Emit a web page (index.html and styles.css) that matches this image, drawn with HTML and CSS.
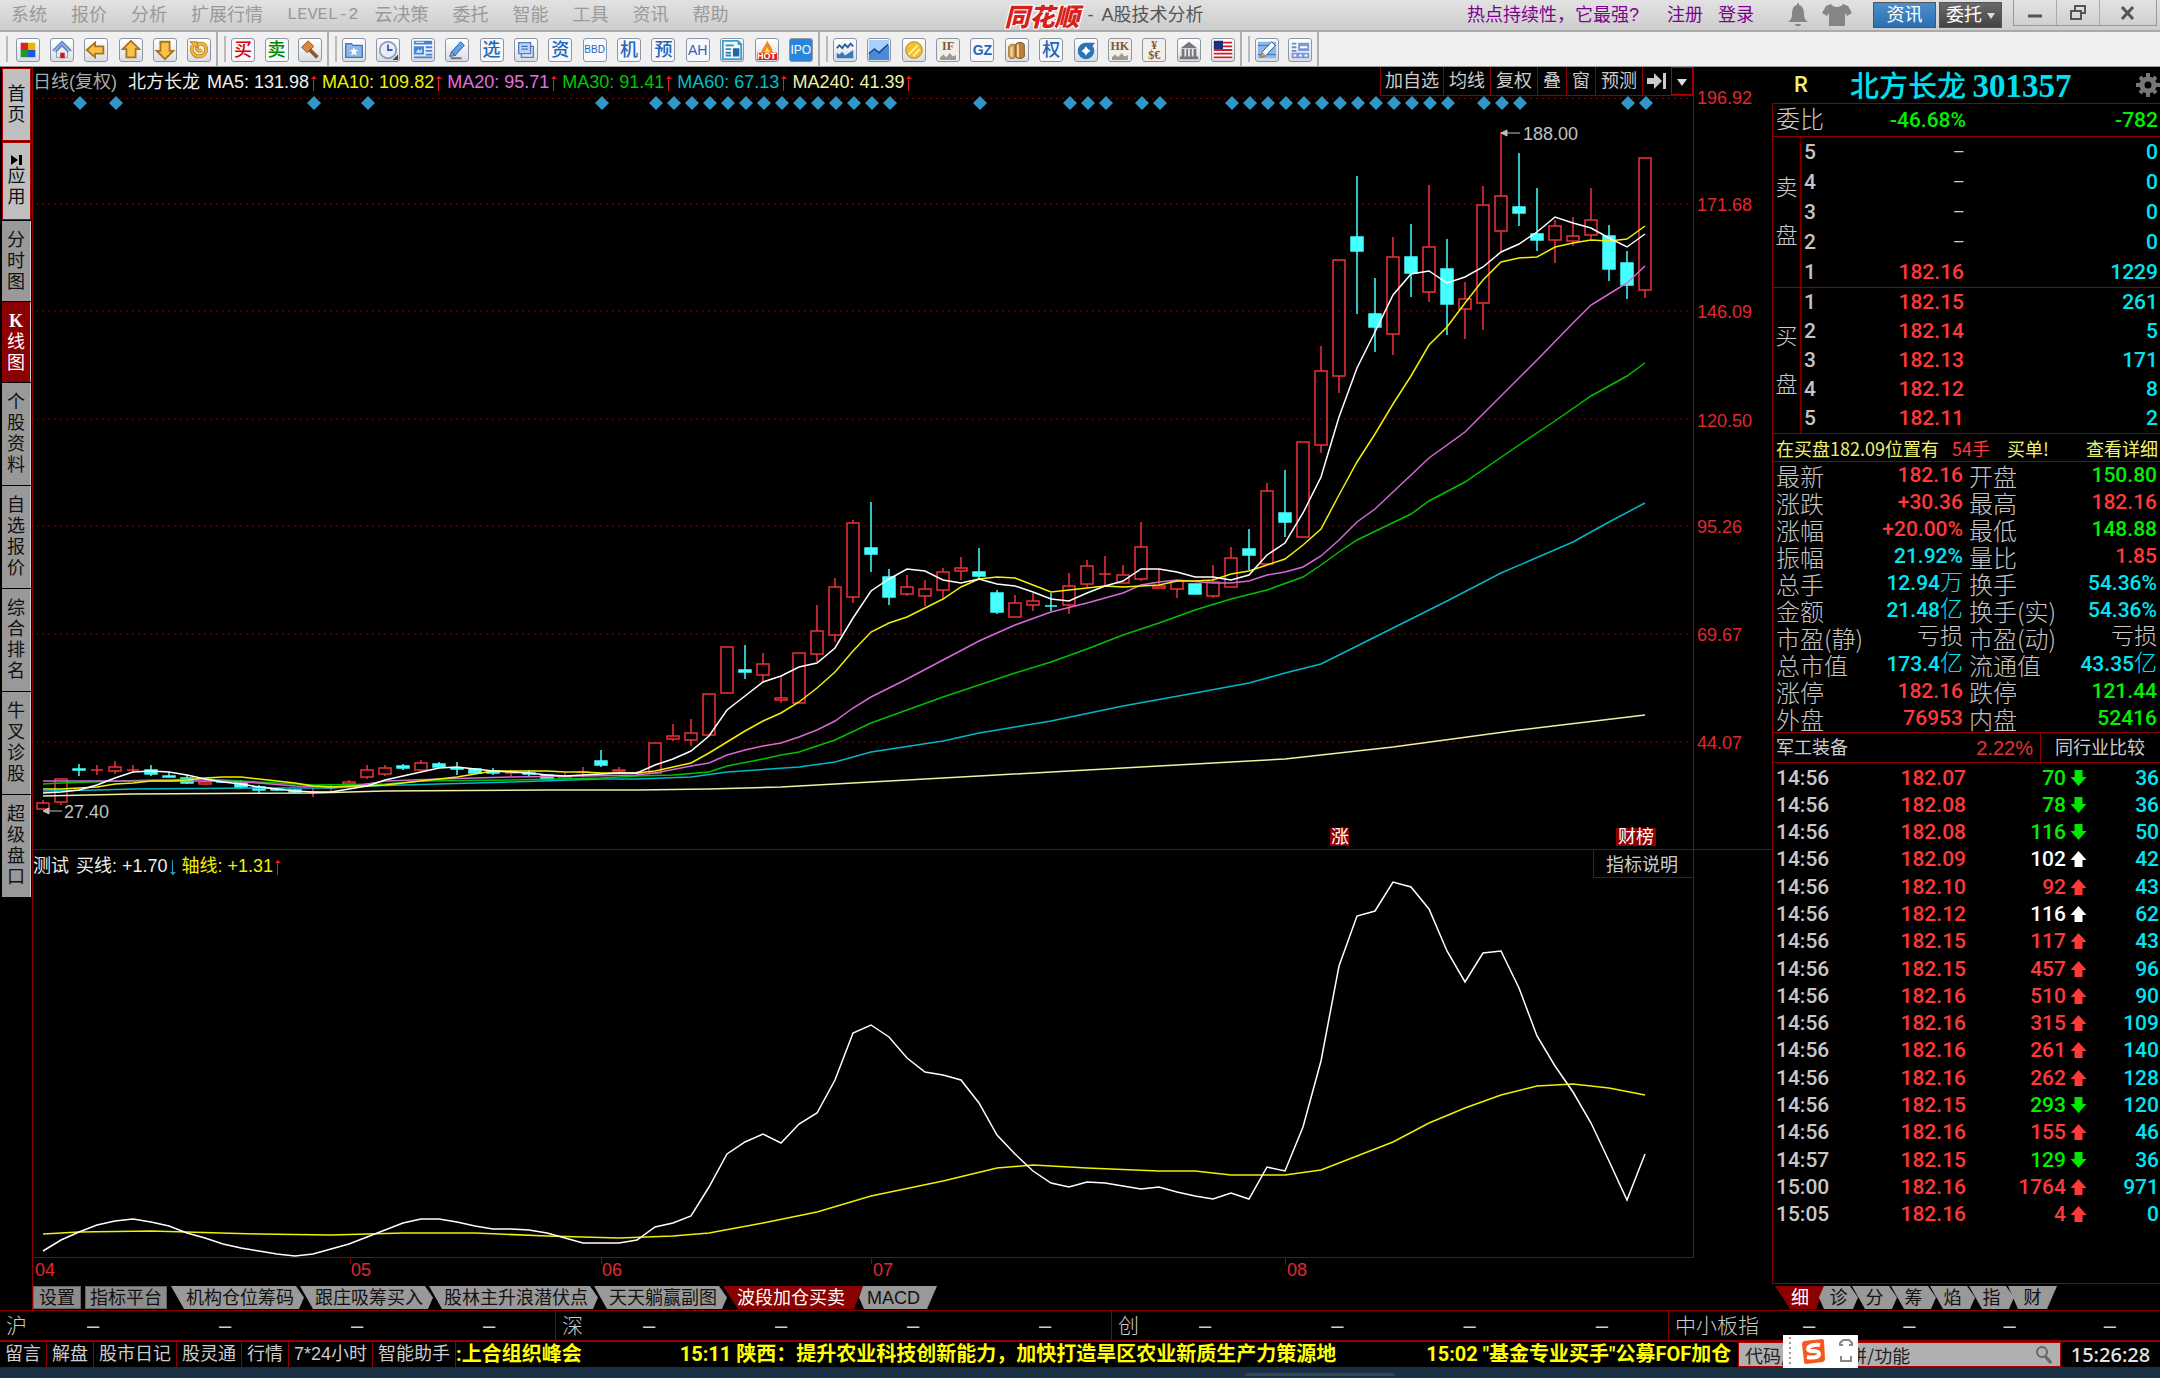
FILE: index.html
```html
<!DOCTYPE html>
<html lang="zh-CN">
<head>
<meta charset="utf-8">
<title>同花顺 - A股技术分析</title>
<link rel="stylesheet" href="styles.css">
</head>
<body>
<header class="titlebar">
  <nav class="menu">
    <a href="#">系统</a><a href="#">报价</a><a href="#">分析</a><a href="#">扩展行情</a><a href="#" class="latin">LEVEL-2</a><a href="#">云决策</a><a href="#">委托</a><a href="#">智能</a><a href="#">工具</a><a href="#">资讯</a><a href="#">帮助</a>
  </nav>
  <h1 class="brand"><span class="logo">同花顺</span><span>-</span><span>A股技术分析</span></h1>
  <div class="account">
    <a href="#" class="promo">热点持续性，它最强?</a><a href="#" class="reg">注册</a><a href="#">登录</a>
    <svg class="bell" width="24" height="24" viewBox="0 0 24 24"><path fill="#858585" d="M12 0c1 0 1 1 1 2c4 1 5 5 5 9c0 4 1 6 4 8H2c3-2 4-4 4-8c0-4 1-8 5-9c0-1 0-2 1-2zM9 21h6c0 3-6 3-6 0z"/></svg>
    <svg width="30" height="24" viewBox="0 0 30 24"><path fill="#858585" d="M9 1c2 4 10 4 12 0l5 2l4 7l-5 3l-2-3v13H7V10l-2 3l-5-3l4-7z"/></svg>
    <button class="tbtn blue">资讯</button><button class="tbtn dark">委托 <i class="caret"></i></button>
  </div>
  <div class="winbtns">
    <button aria-label="最小化"><svg width="20" height="20" viewBox="0 0 20 20"><path stroke="#555" stroke-width="3" d="M3 13h14"/></svg></button>
    <button aria-label="还原"><svg width="20" height="20" viewBox="0 0 20 20"><path fill="none" stroke="#555" stroke-width="2" d="M7 7V3h10v7h-4M3 8h10v8H3z"/></svg></button>
    <button class="close" aria-label="关闭"><svg width="20" height="20" viewBox="0 0 20 20"><path stroke="#555" stroke-width="3" d="M4 4l11 12M15 4L4 16"/></svg></button>
  </div>
</header>

<div class="toolbar">
  <div class="group g1">
    <button aria-label="窗口"><svg viewBox="0 0 24 24"><path fill="#d22" d="M4 4h8v8H4z"/><path fill="#e9b800" d="M12 4h8v8h-8z"/><path fill="#1a9a2a" d="M4 12h8v8H4z"/><path fill="#2058d8" d="M12 12h8v8h-8z"/></svg></button>
    <button aria-label="首页"><svg viewBox="0 0 24 24"><path fill="#e8ecf4" stroke="#8a98b0" d="M6 12v8h12v-8l-6-6z"/><path fill="#b22" d="M10 15h5v6h-5z"/><path fill="none" stroke="#5c86c8" stroke-width="2" d="M2 13L12 3l10 10M5 14l7-7l7 7"/></svg></button>
    <button aria-label="后退"><svg viewBox="0 0 24 24"><path class="gold" d="M2 12l9-8v4h9v8h-9v4z"/></svg></button>
    <button aria-label="上一个"><svg viewBox="0 0 24 24"><path class="gold" d="M12 2l9 9h-4v9H7v-9H3z"/></svg></button>
    <button aria-label="下一个"><svg viewBox="0 0 24 24"><path class="gold" d="M12 22l9-9h-4V3H7v10H3z"/></svg></button>
    <button aria-label="刷新"><svg viewBox="0 0 24 24"><path fill="none" stroke="#b07a10" stroke-width="4" d="M5 7c-3 7 2 12 7 12s10-5 7-11c-2-4-8-4-9 0s2 6 5 4"/><path fill="none" stroke="#f6b83c" stroke-width="2.500" d="M5 7c-3 7 2 12 7 12s10-5 7-11c-2-4-8-4-9 0s2 6 5 4"/><path fill="#f6b83c" stroke="#b07a10" d="M2 3h8v7z"/></svg></button>
  </div>
  <div class="group g2">
    <button class="t red">买</button><button class="t green">卖</button>
    <button aria-label="工具"><svg viewBox="0 0 24 24"><path stroke="#8a5a33" stroke-width="4" d="M11 11l9 9"/><path fill="#d98840" stroke="#8a4a1a" d="M3 9l7-7l6 6l-7 7z"/></svg></button>
  </div>
  <div class="group g3">
    <button aria-label="自选"><svg viewBox="0 0 24 24"><path fill="#8db8ea" stroke="#4274b8" stroke-width="1.500" d="M3 5h6l2 2h10v13H3z"/><path fill="#fff" d="M12 9l1.500 3H17l-3 2l1 4l-3-2l-3 2l1-4l-3-2h3.500z"/></svg></button>
    <button aria-label="历史"><svg viewBox="0 0 24 24"><circle cx="12" cy="12" r="9" fill="#e8eef8" stroke="#8fa0b8" stroke-width="2"/><path fill="none" stroke="#3862b0" stroke-width="2" d="M12 6v6h5"/><path fill="#444" d="M17 23h6v-6z"/></svg></button>
    <button aria-label="新闻"><svg viewBox="0 0 24 24"><path fill="#4484d8" d="M2 2h20v4H2z"/><path fill="#fff" d="M4 3h9v1H4z"/><path fill="#4484d8" d="M2 8h11v9H2z"/><path stroke="#4484d8" stroke-width="2" d="M15 9h7M15 13h7M15 17h7M2 20h20"/><path fill="#cfe2fa" d="M4 15l3-4l2 2l2-3v5z"/></svg></button>
    <button aria-label="画线"><svg viewBox="0 0 24 24"><path fill="#5ea2ea" stroke="#2a5ca8" d="M6 14L16 3l4 4L10 18z"/><path fill="#e09a6a" stroke="#2a5ca8" d="M4 19l2-5l4 4z"/><path stroke="#678" stroke-width="2" d="M5 21h12"/></svg></button>
    <button class="t">选</button>
    <button aria-label="文档"><svg viewBox="0 0 24 24"><path fill="#dbe8fa" stroke="#5580b8" stroke-width="1.500" d="M7 8h13v12H7z"/><path fill="#bcd6f6" stroke="#5580b8" stroke-width="1.500" d="M4 4h13v12H4z"/><path stroke="#4475b8" stroke-width="1.500" d="M7 8h7M7 11h7"/></svg></button>
    <button class="t">资</button><button class="t n">BBD</button><button class="t">机</button><button class="t">预</button><button class="t n">AH</button>
    <button aria-label="公告"><svg viewBox="0 0 24 24"><path fill="#3a9fd0" d="M1 1h18l4 4v18H1z"/><path fill="#f2fafe" d="M3 3h15v3l3 1v14H3z"/><path stroke="#3a88b8" stroke-width="2" d="M5 7h9M5 11h6M5 15h6M5 18h6"/><path fill="#246a98" d="M13 10h7v9h-7z"/></svg></button>
    <button aria-label="热点"><svg viewBox="0 0 24 24"><path fill="#f08a20" d="M12 1c1 4 7 8 6 15H6c-1-6 5-8 6-15z"/><path fill="#ffd850" d="M12 8c0 3 4 5 3 8H9c0-3 3-5 3-8z"/><path fill="#d22" d="M1 15h22v8H1z"/></svg><span class="over">HOT</span></button>
    <button class="t ipo">IPO</button>
  </div>
  <div class="group g4">
    <button aria-label="分时"><svg viewBox="0 0 24 24"><path fill="none" stroke="#2a5ca0" stroke-width="2" d="M3 10l3-3l3 3l3-4l3 3l3-4l3 3"/><path fill="#3a76b8" d="M3 21v-6l3 2l3-3l3 4l3-2l3-2l3-2v9z"/></svg></button>
    <button aria-label="走势"><svg viewBox="0 0 24 24"><path fill="#a8d0fa" d="M1 1h22v22H1z"/><path fill="#4a8ad8" d="M1 17l6-5l5 4l11-9v16H1z"/><path fill="none" stroke="#1d4f9c" stroke-width="2" d="M1 16l6-5l5 4L22 6"/></svg></button>
    <button aria-label="外汇"><svg viewBox="0 0 24 24"><circle cx="12" cy="12" r="9" fill="#f2c230" stroke="#a87a10"/><path fill="none" stroke="#fff0a8" stroke-width="2" d="M6 17L16 7M11 19l7-8"/></svg></button>
    <button class="t brown up">IF<i></i></button><button class="t n gz">GZ</button>
    <button aria-label="商品"><svg viewBox="0 0 24 24"><path fill="#d8a860" stroke="#8a6428" d="M3 8c2-3 7-3 8 0v11c-2 3-7 3-8 0z"/><path fill="#b88038" stroke="#7a5420" d="M10 6c2-3 9-3 10 0v13c-2 3-8 3-10 0z"/><path stroke="#f4dca0" stroke-width="2" d="M13 6v14M6 9v10"/></svg></button>
    <button class="t">权</button>
    <button aria-label="基金"><svg viewBox="0 0 24 24"><circle cx="12" cy="13" r="9" fill="#2a74b8"/><path fill="#2a74b8" d="M12 4h10l-4 5z"/><path fill="#fff" d="M12 8l2 3l3 2l-3 2l-2 3l-2-3l-3-2l3-2z"/></svg></button>
    <button class="t brown up">HK<i></i></button>
    <button class="t brown fx">¥<br>$€</button>
    <button aria-label="银行"><svg viewBox="0 0 24 24"><path fill="#777" d="M12 3l9 7H3zM4 11h3v8H4zM9 11h2v8H9zM13 11h2v8h-2zM17 11h3v8h-3zM2 19h20v3H2z"/></svg></button>
    <button aria-label="美股"><svg viewBox="0 0 24 24"><path fill="#fff" d="M2 2h20v20H2z"/><path stroke="#d02030" stroke-width="2" d="M2 4h20M2 8h20M2 12h20M2 16h20M2 20h20"/><path fill="#1c2f80" d="M2 2h10v9H2z"/></svg></button>
  </div>
  <div class="group g5">
    <button aria-label="笔记"><svg viewBox="0 0 24 24"><path fill="#8ab8ec" d="M2 3h20v18H2z"/><path stroke="#3a6ab0" d="M2 7h20M2 17h20"/><path fill="#f8fafe" stroke="#2a4c88" d="M5 20l2-6L17 3l4 4l-10 11z"/><path fill="#d8a040" d="M5 20l2-6l4 4z"/></svg></button>
    <button aria-label="版面"><svg viewBox="0 0 24 24"><path fill="#7a9ad8" d="M10 4h12v9H10zM3 15h19v6H3z"/><path stroke="#6a8ac8" stroke-width="2" d="M3 5h5M3 9h5M3 13h5"/><path stroke="#fff" stroke-width="2" d="M12 9h8M5 18h3M11 18h3M17 18h3"/></svg></button>
  </div>
</div>

<main class="workspace">
  <nav class="side">
    <button class="lite h2">首页</button>
    <button class="lite h3"><svg width="12" height="12" viewBox="0 0 12 12"><path d="M0 1l7 5l-7 5zM8 1h3v10H8z"/></svg>应用</button>
    <button class="h3">分时图</button>
    <button class="h3 on"><b>K</b>线图</button>
    <button>个股资料</button>
    <button>自选报价</button>
    <button>综合排名</button>
    <button>牛叉诊股</button>
    <button>超级盘口</button>
  </nav>

  <section class="charts">
    <div class="chart-head">
      <div class="legend">
        <span class="gray">日线(复权)</span><span class="name">北方长龙</span><span class="ma">MA5: 131.98<i class="up"></i></span><span class="ma yellow">MA10: 109.82<i class="up"></i></span><span class="ma pink">MA20: 95.71<i class="up"></i></span><span class="ma lime">MA30: 91.41<i class="up"></i></span><span class="ma teal">MA60: 67.13<i class="up"></i></span><span class="ma pale">MA240: 41.39<i class="up"></i></span>
      </div>
      <div class="chart-tools">
        <button class="slim">加自选</button><button>均线</button><button>复权</button><button>叠</button><button>窗</button><button>预测</button><button class="slim" aria-label="跳转"><svg width="20" height="18" viewBox="0 0 20 18"><path fill="#ccc" d="M0 6h7V1l8 8l-8 8v-5H0zM16 1h3v16h-3z"/></svg></button><button class="drop" aria-label="更多"><i class="caret"></i></button>
      </div>
    </div>
    <svg id="price" class="plot" viewBox="32 98 1740 752" role="img" aria-label="日K线"></svg>
    <div class="sub-head">
      <div class="legend"><span>测试</span><span class="ma">买线: +1.70<i class="down"></i></span><span class="ma yellow">轴线: +1.31<i class="up"></i></span></div>
      <button>指标说明</button>
    </div>
    <svg id="indicator" class="plot" viewBox="32 878 1740 406" role="img" aria-label="指标"></svg>
    <div class="tabs">
      <button class="box">设置</button><button class="box wide">指标平台</button>
      <button class="tab first">机构仓位筹码</button><button class="tab">跟庄吸筹买入</button><button class="tab">股林主升浪潜伏点</button><button class="tab">天天躺赢副图</button><button class="tab active">波段加仓买卖</button><button class="tab last">MACD</button>
    </div>
  </section>

  <aside class="quote">
    <div class="stock"><span class="r">R</span><h2>北方长龙 <b>301357</b></h2>
      <svg width="24" height="24" viewBox="0 0 24 24"><circle cx="12" cy="12" r="6" fill="none" stroke="#777" stroke-width="5"/><path stroke="#777" stroke-width="4" d="M12 0v5M12 19v5M0 12h5M19 12h5M4 4l3 3M17 17l3 3M20 4l-3 3M7 17l-3 3"/></svg>
    </div>
    <div class="panel">
      <div class="ratio"><span>委比</span><b class="g">-46.68%</b><b class="g">-782</b></div>
      <div class="book sell">
        <div class="bs">卖<br>盘</div>
        <table class="num">
          <tr><th>5</th><td class="w">—</td><td>0</td></tr>
          <tr><th>4</th><td class="w">—</td><td>0</td></tr>
          <tr><th>3</th><td class="w">—</td><td>0</td></tr>
          <tr><th>2</th><td class="w">—</td><td>0</td></tr>
          <tr><th>1</th><td class="r">182.16</td><td>1229</td></tr>
        </table>
      </div>
      <div class="book">
        <div class="bs">买<br>盘</div>
        <table class="num">
          <tr><th>1</th><td class="r">182.15</td><td>261</td></tr>
          <tr><th>2</th><td class="r">182.14</td><td>5</td></tr>
          <tr><th>3</th><td class="r">182.13</td><td>171</td></tr>
          <tr><th>4</th><td class="r">182.12</td><td>8</td></tr>
          <tr><th>5</th><td class="r">182.11</td><td>2</td></tr>
        </table>
      </div>
      <div class="notice"><span>在买盘182.09位置有</span><span class="r">54手</span><span>买单!</span><a href="#">查看详细</a></div>
      <table class="stats num">
        <tr><th>最新</th><td class="r">182.16</td><th>开盘</th><td class="g">150.80</td></tr>
        <tr><th>涨跌</th><td class="r">+30.36</td><th>最高</th><td class="r">182.16</td></tr>
        <tr><th>涨幅</th><td class="r">+20.00%</td><th>最低</th><td class="g">148.88</td></tr>
        <tr><th>振幅</th><td>21.92%</td><th>量比</th><td class="r">1.85</td></tr>
        <tr><th>总手</th><td>12.94<i>万</i></td><th>换手</th><td>54.36%</td></tr>
        <tr><th>金额</th><td>21.48<i>亿</i></td><th>换手(实)</th><td>54.36%</td></tr>
        <tr><th>市盈(静)</th><td class="w"><i>亏损</i></td><th>市盈(动)</th><td class="w"><i>亏损</i></td></tr>
        <tr><th>总市值</th><td>173.4<i>亿</i></td><th>流通值</th><td>43.35<i>亿</i></td></tr>
        <tr><th>涨停</th><td class="r">182.16</td><th>跌停</th><td class="g">121.44</td></tr>
        <tr><th>外盘</th><td class="r">76953</td><th>内盘</th><td class="g">52416</td></tr>
      </table>
      <div class="sector"><span>军工装备</span><span class="pct">2.22%</span><button>同行业比较</button></div>
      <table class="ticks num"><tbody id="ticks"></tbody></table>
    </div>
    <div class="tabs qtabs">
      <button class="tab active">细</button><button class="tab mid">诊</button><button class="tab">分</button><button class="tab">筹</button><button class="tab">焰</button><button class="tab">指</button><button class="tab end">财</button>
    </div>
  </aside>
</main>

<section class="indices">
  <div><span>沪</span><i>–</i><i>–</i><i>–</i><i>–</i></div>
  <div><span>深</span><i>–</i><i>–</i><i>–</i><i>–</i></div>
  <div><span>创</span><i>–</i><i>–</i><i>–</i><i>–</i></div>
  <div><span>中小板指</span><i>–</i><i>–</i><i>–</i><i>–</i></div>
</section>

<footer class="status">
  <nav><a href="#">留言</a><a href="#">解盘</a><a href="#">股市日记</a><a href="#">股灵通</a><a href="#">行情</a><a href="#">7*24小时</a><a href="#">智能助手</a></nav>
  <div class="ticker"><a href="#">:上合组织峰会</a><a href="#" class="n2">15:11 陕西：提升农业科技创新能力，加快打造旱区农业新质生产力策源地</a><a href="#" class="n3">15:02 "基金专业买手"公募FOF加仓</a></div>
  <div class="search">
    <input type="text" aria-label="代码搜索" value="代码/名称/简拼/功能">
    <svg width="16" height="18" viewBox="0 0 16 18"><circle cx="6" cy="6" r="5" fill="none" stroke="#666" stroke-width="2"/><path stroke="#666" stroke-width="3" d="M9 10l6 7"/></svg>
    <div class="ime">
      <svg width="75" height="33" viewBox="0 0 75 33"><path stroke="#999" stroke-width="2" stroke-dasharray="2 3" d="M7 2v30"/><path fill="#f4581e" d="M21 6l18-2q2 0 2 2l1 18q0 2-2 3l-17 2q-2 0-2-2l-2-18q0-2 2-3z"/><path fill="none" stroke="#fff" stroke-width="4" d="M37 10c-6-1-12 1-12 4c0 4 11 0 11 5c0 4-8 4-12 3"/><path fill="none" stroke="#888" stroke-width="2" d="M60 5h6l3 3v2h-3M60 5l-3 3v2h3M58 21v5h10v-5"/></svg>
    </div>
  </div>
  <time>15:26:28</time>
</footer>
<div class="desktop"><span></span></div>
<script src="chart.js"></script>
</body>
</html>
```
FILE: styles.css
```css
* { box-sizing: border-box; }
body {
  margin: 0;
  min-height: 100vh;
  background: #000;
  color: #ccc;
  font: 18px/20px "Liberation Sans", "Noto Sans CJK SC", sans-serif;
  display: flex;
  flex-direction: column;
}
button, input { font: inherit; color: inherit; border: 0; background: none; padding: 0; margin: 0; }
a { color: inherit; text-decoration: none; }
h1, h2 { margin: 0; font-weight: 400; font-size: inherit; }
i { font-style: normal; }
table { border-collapse: collapse; }
th, td { padding: 0; }
.caret { display: inline-block; border: 5px solid transparent; border-top: 7px solid #ddd; border-bottom: 0; vertical-align: middle; }

/* title bar */
.titlebar {
  display: grid;
  grid-template-columns: 46.5% auto 1fr auto;
  align-items: center;
  height: 32px;
  background: linear-gradient(#e2e2e2, #cdcdcd);
  border-bottom: 2px solid #aaa;
  white-space: nowrap;
}
.menu { display: flex; gap: 24px; padding-left: 11px; color: #999; }
.menu .latin { font: 17px/20px "Liberation Mono", monospace; margin-right: -8px; }
.brand { display: flex; align-items: center; gap: 8px; color: #555; }
.logo {
  font: italic 900 25px/28px "Noto Sans CJK SC", sans-serif;
  color: #d8201c;
  text-shadow: 1px 1px #fff, -1px -1px #fff, 1px -1px #fff, -1px 1px #fff;
}
.account { display: flex; align-items: center; justify-content: flex-end; color: #800090; }
.promo { margin-right: 28px; }
.reg { margin-right: 15px; }
.bell { margin: 0 12px 0 32px; }
.tbtn { width: 63px; height: 26px; color: #fff; border: 1px solid #555; margin-left: 3px; }
.tbtn.blue { background: linear-gradient(#4d8ecb, #2c6fb0); margin-left: 21px; }
.tbtn.dark { background: linear-gradient(#6a6a6a, #444); }
.tbtn .caret { border-width: 6px 4px 0; }
.winbtns { display: flex; height: 26px; align-self: start; margin: 0 3px 0 11px; border: 1px solid #999; border-top: 0; }
.winbtns button { width: 43px; display: grid; place-items: center; border-right: 1px solid #aaa; }
.winbtns .close { width: 56px; border-right: 0; }

/* toolbar */
.toolbar { display: flex; height: 35px; background: #f0f0f0; border-bottom: 1px solid #999; }
.group {
  position: relative;
  display: flex;
  justify-content: space-between;
  align-items: center;
  padding: 2px 5px 0 13px;
  border-right: 2px solid #b0b0b0;
}
.group::before { content: ""; position: absolute; left: 6px; top: 4px; bottom: 4px; border-left: 2px solid #bbb; }
.g1 { width: 218px; padding-left: 16px; }
.g2 { width: 111px; }
.g3 { width: 491px; }
.g4 { width: 422px; }
.g5 { width: 77px; }
.group button {
  position: relative;
  width: 24px;
  height: 24px;
  border: 1px solid #8e96a4;
  border-radius: 3px;
  background: linear-gradient(#fff, #d9dde3);
  overflow: hidden;
}
.group svg { display: block; width: 22px; height: 22px; }
.gold { fill: #fbc24a; stroke: #a87418; stroke-width: 2; }
.group .t { font-size: 18px; line-height: 21px; color: #1f66bd; background: #f6f8fc; font-weight: 500; }
.group .red { color: #d00; }
.group .green { color: #080; }
.group .n { font: 14px/22px "Liberation Sans", sans-serif; }
.group .n:nth-child(8) { font-size: 10px; }
.group .gz { font-weight: 700; }
.group .ipo { background: #2a86dc; color: #fff; font: 12px/22px "Liberation Sans", sans-serif; }
.group .brown { color: #80583a; font: bold 12px/14px "Liberation Serif", serif; background: #f2efe8; }
.group .up { padding-bottom: 8px; }
.up i { position: absolute; left: 3px; right: 3px; bottom: 1px; height: 7px; background: #999; clip-path: polygon(0 60%, 20% 20%, 40% 60%, 60% 0, 80% 50%, 100% 30%, 100% 100%, 0 100%); }
.group .fx { line-height: 10px; }
.over { position: absolute; left: 0; right: 0; bottom: 0; font: bold 9px/9px "Liberation Sans", sans-serif; color: #fff; }

/* workspace */
.workspace { display: grid; grid-template-columns: 32px minmax(0, 1fr) 388px; }
.side { padding: 1px 1px 0 2px; display: flex; flex-direction: column; gap: 1px; }
.side button {
  height: 102px;
  padding: 0 5px;
  background: #999;
  color: #111;
  line-height: 21px;
  word-break: break-all;
  border-right: 1px solid #ccc;
}
.side .h2 { height: 73px; }
.side .h3 { height: 80px; }
.side .lite { background: #c0c0c0; border: 1px solid #b00000; padding: 0 4px; }
.side .lite.h3 { height: 78px; }
.side .on { background: #8b0000; color: #fff; }
.side b { display: block; font-family: "Liberation Serif", serif; }
.side svg { display: block; margin: 0 auto; }

.charts { border-left: 1px solid #8b0000; display: flex; flex-direction: column; }
.chart-head, .sub-head {
  display: flex;
  justify-content: space-between;
  margin-right: 78px;
  border-right: 1px solid #8b0000;
  white-space: nowrap;
}
.chart-head { height: 31px; }
.legend { display: flex; align-items: center; color: #eee; }
.chart-head .legend { height: 29px; }
.legend .gray { color: #aaa; margin-right: 11px; }
.legend .name { margin-right: 7px; }
.ma { display: flex; align-items: center; margin-right: 6px; }
.ma i { position: relative; width: 5px; height: 15px; margin: 3px 0 0 2px; background: linear-gradient(#e02020, #e02020) center / 1px 100% no-repeat; }
.ma i.up::before { content: ""; position: absolute; left: 0; top: 0; border: 3px solid transparent; border-bottom-color: #e02020; border-top: 0; }
.ma .up { left: auto; right: auto; bottom: auto; clip-path: none; }
.ma i.down { background-image: linear-gradient(#20a8b0, #20a8b0); }
.ma i.down::before { content: ""; position: absolute; left: 0; bottom: 0; border: 3px solid transparent; border-top-color: #20a8b0; border-bottom: 0; }
.yellow { color: #f0f000; }
.pink { color: #e070e0; }
.lime { color: #00c800; }
.teal { color: #00c0c8; }
.pale { color: #f0f0a0; }
.chart-tools { display: flex; height: 29px; border-bottom: 1px solid #8b0000; color: #ccc; }
.chart-tools button { border-left: 1px solid #8b0000; padding: 0 5px; }
.chart-tools .slim { padding: 0 4px; }
.chart-tools .drop { border: 1px solid #b00000; }
.chart-tools svg { display: block; }
.plot { display: block; width: calc(100% + 1px); height: auto; margin-left: -1px; overflow: visible; }
.sub-head { height: 28px; }
.sub-head .legend { padding-top: 3px; }
.sub-head .legend span { margin-right: 7px; }
.sub-head button { border: 1px solid #8b0000; border-top: 0; border-right: 0; padding: 3px 15px 0 12px; height: 28px; color: #ccc; }

.grid { stroke: #800; stroke-width: 1; stroke-dasharray: 2 4; }
.frame { stroke: #8b0000; stroke-width: 1; shape-rendering: crispEdges; fill: none; }
.up-c { stroke: #f03038; stroke-width: 1.500; fill: none; }
.dn-c { stroke: #4ff; stroke-width: 1.500; fill: #4ff; }
.line { fill: none; stroke-width: 1.500; }
.mark { fill: #2f98c8; }
.axis { fill: #e02830; }
.note { fill: #c0c0c0; }
.arrow { stroke: #c0c0c0; fill: #c0c0c0; }
.badge { fill: #8b0000; }
.badge-t { fill: #fff; }

/* tab strips */
.tabs { display: flex; padding: 2px 0 1px; height: 26px; color: #111; white-space: nowrap; }
.tabs button { height: 23px; line-height: 24px; background: #999; overflow: hidden; }
.tabs .box { width: 48px; margin-right: 4px; background: #8c8c8c; border: 1px solid #666; line-height: 22px; }
.tabs .wide { width: 82px; }
.tabs .tab {
  padding: 0 10px 0 15px;
  margin-right: -4px;
  clip-path: polygon(0 0, calc(100% - 8px) 0, 100% 50%, calc(100% - 5px) 100%, 13px 100%);
}
.tabs .active {
  background: #8b0000;
  color: #fff;
  padding: 0 18px 0 14px;
  clip-path: polygon(0 0, 100% 0, calc(100% - 9px) 100%, 15px 100%);
}
.tabs .last { padding: 0 17px 0 8px; clip-path: polygon(4px 0, 100% 0, calc(100% - 10px) 100%, 5px 100%, 0 50%); }
.qtabs { padding-left: 3px; }
.qtabs .tab { width: 45px; padding: 0; margin-right: -6px; }
.qtabs .active { width: 50px; }
.qtabs .mid { width: 39px; clip-path: polygon(5px 0, calc(100% - 8px) 0, 100% 50%, calc(100% - 5px) 100%, 5px 100%, 0 50%); }
.qtabs .end { width: 49px; clip-path: polygon(0 0, 100% 0, calc(100% - 10px) 100%, 10px 100%); }

/* quote panel */
.quote { display: flex; flex-direction: column; }
.stock { display: grid; grid-template-columns: 78px 1fr auto; align-items: center; height: 36px; color: #00e0f0; }
.stock .r { padding-left: 22px; font: 500 22px/24px Roboto, sans-serif; color: #f0f070; }
.stock h2 { font: 500 29px/34px "Noto Sans CJK SC", sans-serif; white-space: nowrap; }
.stock b { font: bold 33px/34px "Liberation Serif", serif; }
.panel { flex: 1; border: 1px solid #8b0000; border-right: 0; }
.g { color: #00f000; }
.r { color: #ff3838; }
.w { color: #ccc; }
.num { font: 500 21px/27px Roboto, "Noto Sans CJK SC", sans-serif; color: #00e4f4; }
.num td { text-align: right; }
.num td.g { color: #00f000; }
.num td.r { color: #ff3838; }
.num td.w { color: #ccc; }
.ratio { display: grid; grid-template-columns: 60px 130px 1fr; align-items: center; height: 33px; padding: 0 2px 0 3px; border-bottom: 1px solid #8b0000; text-align: right; }
.ratio span { font-size: 24px; font-weight: 300; text-align: left; }
.ratio b { font: 500 21px/27px Roboto, sans-serif; }
.book { display: flex; border-bottom: 1px solid #8b0000; }
.bs { width: 28px; border-right: 1px dotted #a00; font-size: 22px; line-height: 48px; font-weight: 300; text-align: center; align-self: stretch; display: grid; place-content: center; }
.book table { flex: 1; }
.book th { width: 20px; font-weight: 500; color: #c4c4c4; text-align: left; padding-left: 3px; }
.book td { line-height: 28px; padding: 0 2px 1px 0; }
.sell td { padding-top: 1px; }
.book td:nth-child(2) { width: 145px; }
.book .w { font-size: 14px; }
.notice { display: grid; grid-template-columns: 176px 55px 1fr auto; height: 28px; align-items: center; color: #f0f070; padding: 0 2px 0 3px; border-bottom: 1px solid #8b0000; white-space: nowrap; font-family: "Noto Sans CJK SC", sans-serif; }
.stats { width: 100%; table-layout: fixed; }
.stats tr { height: 27px; }
.stats th { width: 98px; font: 300 24px/27px "Noto Sans CJK SC", sans-serif; color: #c4c4c4; text-align: left; padding-left: 3px; white-space: nowrap; }
.stats th, .stats td { line-height: 27px; }
.stats td:last-child { padding-right: 3px; }
.stats td:nth-child(2) { width: 95px; padding-right: 3px; }
.stats td i { font-weight: 300; font-size: 23px; line-height: 24px; }
.sector { display: grid; grid-template-columns: 1fr auto 120px; height: 31px; line-height: 30px; padding-left: 3px; border: solid #8b0000; border-width: 1px 0; }
.sector .pct { color: #e83038; font-size: 20px; padding-right: 7px; }
.sector button { border-left: 1px solid #8b0000; text-align: left; padding-left: 14px; }
.ticks { width: 100%; height: 464px; margin-top: 1px; table-layout: fixed; }
.ticks td { line-height: 26px; }
.ticks td:nth-child(1) { width: 80px; text-align: left; padding-left: 3px; color: #c8c8c8; }
.ticks td:nth-child(2) { width: 113px; color: #ff3838; }
.ticks td:nth-child(3) { width: 100px; }
.ticks td:nth-child(4) { width: 24px; }
.ticks td:nth-child(5) { padding-right: 1px; }
.ticks svg { display: block; margin: 0 auto; }
.ticks .g { fill: #00e800; }
.ticks .r { fill: #ff3838; }
.ticks .h, .num td.h { color: #fff; fill: #fff; }

/* index strip and status bar */
.indices { display: grid; grid-template-columns: 556px 556px 557px 1fr; height: 32px; border: solid #8b0000; border-width: 1px 0 2px; }
.indices div { display: flex; align-items: center; padding-left: 6px; border-right: 1px solid #8b0000; }
.indices div:last-child { border-right: 0; }
.indices span { font-size: 21px; font-weight: 300; }
.indices i { flex: 1; text-align: center; font-size: 22px; }
.status { display: flex; height: 26px; border-bottom: 1px solid #8b0000; white-space: nowrap; }
.status nav { display: flex; line-height: 25px; color: #ccc; }
.status nav a { padding: 0 5px; border-right: 1px solid #8b0000; }
.ticker { flex: 1; min-width: 0; overflow: hidden; display: flex; color: #ff0; font: bold 20px/25px Roboto, "Noto Sans CJK SC", sans-serif; }
.n2 { margin-left: 98px; }
.n3 { margin-left: 90px; }
.search { position: relative; width: 323px; display: flex; align-items: center; background: #b0b0b0; border: 1px solid #a00; padding: 0 8px 0 6px; color: #222; }
.search input { flex: 1; min-width: 0; font-family: "Noto Sans CJK SC", sans-serif; }
.ime { position: absolute; left: 44px; top: -8px; width: 75px; height: 33px; background: #fff; }
time { width: 99px; text-align: center; font: 500 20px/25px "Noto Sans", sans-serif; color: #e4e4e4; }
.desktop { flex: 1; min-height: 8px; background: #1a3044; padding: 5px 0 0 1245px; }
.desktop span { display: block; width: 150px; height: 3px; border-radius: 4px 4px 0 0; background: #354858; }
```
FILE: chart.js
```js
// Candles: [direction, high, open/close top, open/close bottom, low], in plot units.
const candles = [
  [1,800,803,809,810],[1,779,779,802,805],[0,764,769,770,776],[1,765,770,770,775],[1,761,767,771,774],
  [1,765,770,770,773],[0,765,770,774,776],[0,772,776,777,777],[0,775,778,783,784],[1,780,782,784,785],
  [0,780,781,782,783],[0,780,783,787,788],[0,785,787,790,793],[0,788,789,790,791],[0,789,790,792,793],
  [1,788,792,792,797],[1,785,788,788,791],[1,780,782,784,785],[1,765,770,777,779],[1,765,768,774,776],
  [0,764,766,768,770],[1,760,763,770,770],[0,762,764,767,768],[0,762,768,769,775],[0,768,769,773,774],
  [0,768,771,773,775],[1,770,773,773,776],[0,770,773,774,776],[0,774,775,779,780],[1,773,776,778,780],
  [1,767,772,772,777],[0,750,761,765,767],[1,767,770,771,774],[1,771,773,773,775],[1,743,743,773,773],
  [1,724,736,739,741],[1,719,733,740,746],[1,694,694,735,735],[1,647,647,693,693],[0,645,670,672,679],
  [1,653,664,675,683],[1,676,698,700,703],[1,653,653,703,703],[1,605,631,654,662],[1,578,587,635,642],
  [1,520,523,597,603],[0,502,548,554,572],[0,569,577,597,605],[1,575,587,594,596],[1,580,589,596,606],
  [1,568,572,590,598],[1,557,568,571,580],[0,548,572,576,579],[0,590,593,612,614],[1,595,603,617,617],
  [1,593,601,605,611],[0,593,606,606,611],[1,573,586,605,614],[1,560,566,584,587],[1,556,574,574,586],
  [1,565,575,583,583],[1,522,547,579,581],[1,569,586,588,588],[1,581,581,589,598],[0,584,584,594,594],
  [1,565,582,596,598],[1,547,558,587,587],[0,529,549,555,570],[1,483,491,564,564],[0,470,513,522,537],
  [1,442,442,537,537],[1,346,371,445,453],[1,260,260,376,393],[0,176,237,251,314],[0,278,314,327,352],
  [1,237,257,334,355],[0,224,257,273,297],[1,185,247,292,302],[0,239,269,304,335],[1,282,299,309,339],
  [1,186,205,303,330],[1,132,196,231,251],[0,153,207,213,226],[0,188,234,240,251],[1,220,226,240,263],
  [1,217,236,241,246],[1,188,220,235,239],[0,225,236,269,281],[0,251,263,285,299],[1,158,158,290,298]
];
// Consecutive values, one per candle.
const ma5 = [793,792,790,785,778,772,771,772,775,779,782,784,787,789,791,792,792,789,786,780,776,772,768,767,769,771,772,773,775,776,775,774,773,773,765,759,751,736,710,696,682,676,667,663,648,618,591,579,569,571,580,583,579,584,586,592,599,601,593,586,581,569,569,572,577,577,580,575,555,543,513,477,417,368,332,295,274,271,283,277,267,252,244,232,217,223,228,238,247,234];
const ma10 = [789,789,788,787,784,783,781,781,780,778,777,777,779,781,783,786,787,786,786,785,783,781,779,777,774,771,771,771,771,772,772,773,773,773,771,767,763,753,742,731,721,713,702,688,672,651,632,623,617,608,599,587,579,577,578,585,592,590,588,586,587,586,585,581,581,580,574,571,565,559,545,529,495,462,434,404,376,345,327,303,280,262,258,257,247,243,240,241,239,226];
const buy = [1251,1240,1232,1225,1221,1219,1222,1226,1233,1238,1244,1248,1251,1254,1256,1254,1249,1244,1237,1230,1223,1219,1219,1222,1226,1229,1229,1230,1233,1238,1243,1243,1243,1240,1227,1223,1216,1187,1154,1142,1134,1143,1124,1113,1080,1033,1025,1037,1058,1072,1075,1080,1103,1135,1154,1171,1183,1187,1182,1183,1186,1189,1187,1192,1196,1199,1193,1199,1167,1171,1127,1061,966,916,911,882,887,909,951,982,953,951,988,1036,1066,1092,1123,1161,1200,1154];
// Slow averages: [candle index, value] turning points.
const ma20 = [[0,781],[10,781],[12,783],[14,786],[17,787],[18,784],[19,781],[22,779],[26,777],[30,776],[33,775],[34,773],[36,766],[37,763],[38,755],[39,750],[40,746],[41,743],[42,737],[43,730],[44,721],[45,708],[46,697],[48,679],[50,660],[52,641],[54,625],[56,612],[58,603],[60,593],[61,585],[62,582],[63,580],[65,583],[66,583],[67,581],[68,575],[69,572],[70,567],[71,556],[72,540],[73,522],[74,509],[77,458],[79,432],[83,360],[85,323],[86,305],[87,294],[88,283],[89,266]];
const ma30 = [[0,784],[1,783],[6,780],[9,779],[11,781],[13,783],[15,785],[19,784],[21,781],[26,780],[31,778],[33,776],[35,775],[37,772],[38,766],[40,759],[41,755],[42,752],[44,740],[46,723],[48,710],[50,697],[52,685],[54,673],[56,662],[58,649],[60,635],[62,623],[64,610],[66,599],[68,590],[70,577],[71,565],[72,552],[73,540],[76,514],[77,501],[79,482],[82,445],[84,421],[86,396],[88,376],[89,363]];
const ma60 = [[0,791],[3,790],[5,789],[12,788],[16,788],[18,786],[22,784],[26,782],[31,779],[33,779],[36,777],[38,772],[42,767],[44,762],[46,752],[50,741],[52,733],[56,721],[60,706],[64,693],[67,683],[69,673],[71,664],[73,646],[75,628],[78,601],[81,573],[85,542],[87,522],[89,503]];
const ma240 = [[0,796],[5,794],[15,793],[19,791],[28,790],[33,790],[37,789],[41,787],[46,782],[52,776],[58,770],[64,764],[69,759],[75,747],[82,730],[89,715]];
const axisLine = [[0,1234],[2,1232],[6,1231],[12,1234],[16,1235],[20,1233],[24,1233],[28,1236],[32,1238],[35,1236],[37,1233],[40,1223],[43,1212],[46,1196],[50,1181],[53,1168],[55,1165],[58,1168],[62,1171],[64,1171],[66,1175],[69,1175],[71,1170],[73,1156],[75,1142],[77,1123],[79,1108],[81,1095],[83,1086],[85,1084],[87,1088],[89,1095]];

const x = i => 43 + 18 * i;
const line = (data, color) => {
  const points = data.map((d, i) => Array.isArray(d) ? x(d[0]) + ',' + d[1] : x(i) + ',' + d).join(' ');
  return `<polyline class="line" stroke="${color}" points="${points}"/>`;
};

let out = '<path class="frame" d="M1693.5 98V850M32 849.5H1772M32.5 98V850"/>';
for (const y of [98.5, 204, 311, 419, 526, 634, 742]) out += `<path class="grid" d="M36 ${y}H1692"/>`;
[[103,'196.92'],[210,'171.68'],[317,'146.09'],[426,'120.50'],[532,'95.26'],[640,'69.67'],[748,'44.07']]
  .forEach(([y, t]) => { out += `<text class="axis" x="1697" y="${y + 1}">${t}</text>`; });
candles.forEach(([up, high, top, bottom, low], i) => {
  const c = x(i), cls = up ? 'up-c' : 'dn-c';
  out += `<path class="${cls}" d="M${c} ${high}V${top}M${c} ${bottom}V${low}M${c - 6} ${top}h12V${bottom}h-12z"/>`;
});
out += line(ma240, '#f0f0a0') + line(ma60, '#00b8c8') + line(ma30, '#00c000') + line(ma20, '#d868d8') + line(ma10, '#f0f000') + line(ma5, '#fff');
const marks = [2,4,15,18,31,52,57,58,59,61,62,80,81,82,88,89];
for (let i = 34; i <= 47; i++) marks.push(i);
for (let i = 66; i <= 78; i++) marks.push(i);
for (const i of marks) out += `<path class="mark" d="M${x(i) + 1} 96l7 7l-7 7l-7-7z"/>`;
out += '<path class="arrow" d="M1501 133l6-3v6zM1506 133h14"/><text class="note" x="1523" y="140">188.00</text>';
out += '<path class="arrow" d="M43 811l6-3v6zM48 811h14"/><text class="note" x="64" y="818">27.40</text>';
out += '<path class="badge" d="M1330 828h19v18h-19zM1616 828h40v18h-40z"/><text class="badge-t" x="1331" y="843">涨</text><text class="badge-t" x="1618" y="843">财榜</text>';
document.getElementById('price').innerHTML = out;

let sub = '<path class="frame" d="M32.5 878V1258M1693.5 878V1258M32 1257.500H1694M350.500 1258v6M601.500 1258v6M871.500 1258v6M1285.500 1258v6"/>';
[[35,'04'],[351,'05'],[602,'06'],[873,'07'],[1287,'08']].forEach(([px, t]) => { sub += `<text class="axis" x="${px}" y="1276">${t}</text>`; });
document.getElementById('indicator').innerHTML = sub + line(axisLine, '#f0f000') + line(buy, '#fff');

// Trades: time, price, volume, colour, direction, count.
const trades = [
  ['14:56','182.07',70,'g',0,36],['14:56','182.08',78,'g',0,36],['14:56','182.08',116,'g',0,50],
  ['14:56','182.09',102,'h',1,42],['14:56','182.10',92,'r',1,43],['14:56','182.12',116,'h',1,62],
  ['14:56','182.15',117,'r',1,43],['14:56','182.15',457,'r',1,96],['14:56','182.16',510,'r',1,90],
  ['14:56','182.16',315,'r',1,109],['14:56','182.16',261,'r',1,140],['14:56','182.16',262,'r',1,128],
  ['14:56','182.15',293,'g',0,120],['14:56','182.16',155,'r',1,46],['14:57','182.15',129,'g',0,36],
  ['15:00','182.16',1764,'r',1,971],['15:05','182.16',4,'r',1,0]
];
document.getElementById('ticks').innerHTML = trades.map(([t, p, v, c, up, n]) =>
  `<tr><td>${t}</td><td>${p}</td><td class="${c}">${v}</td><td><svg class="${c}" width="17" height="16" viewBox="0 0 17 16"><path d="${up ? 'M8.500 0l8 9h-4v7h-8V9h-4z' : 'M8.500 16l8-9h-4V0h-8v7h-4z'}"/></svg></td><td>${n}</td></tr>`).join('');
```
